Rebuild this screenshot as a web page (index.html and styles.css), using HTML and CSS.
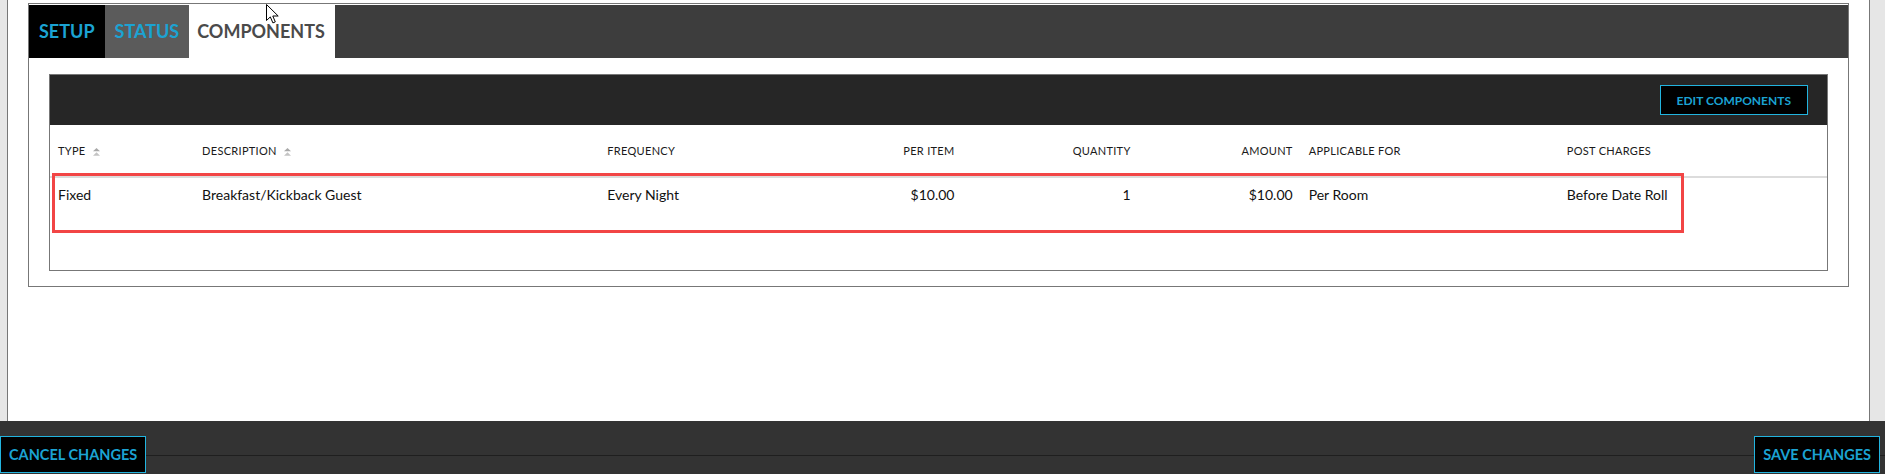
FILE: index.html
```html
<!DOCTYPE html>
<html>
<head>
  <title>Package Components</title>
  <meta name="viewport" content="width=device-width, initial-scale=1">
  <link rel="stylesheet" href="styles.css">
</head>
<body>
  <div class="app">
    <div class="workspace">
      <main class="content">
        <section class="panel">
          <nav class="tabs">
            <a class="tab tab-setup">SETUP</a>
            <a class="tab tab-status">STATUS</a>
            <a class="tab tab-active">COMPONENTS</a>
          </nav>

          <div class="panel-body">
            <div class="grid-box">
              <div class="grid-toolbar">
                <button class="btn btn-edit">EDIT COMPONENTS</button>
              </div>
              <div class="grid-wrap">
                <table class="grid">
                  <colgroup>
                    <col class="c-type"><col class="c-desc"><col class="c-freq"><col class="c-per">
                    <col class="c-qty"><col class="c-amt"><col class="c-app"><col class="c-post">
                  </colgroup>
                  <thead>
                    <tr>
                      <th>Type <svg class="sort" width="7" height="8" viewBox="0 0 7 8"><path d="M3.5 0L7 3.3H0z" fill="#a9a9a9"/><path d="M3.5 4.3L7 7.8H0z" fill="#c4c4c4"/></svg></th>
                      <th>Description <svg class="sort" width="7" height="8" viewBox="0 0 7 8"><path d="M3.5 0L7 3.3H0z" fill="#a9a9a9"/><path d="M3.5 4.3L7 7.8H0z" fill="#c4c4c4"/></svg></th>
                      <th>Frequency</th>
                      <th class="num">Per Item</th>
                      <th class="num">Quantity</th>
                      <th class="num">Amount</th>
                      <th>Applicable For</th>
                      <th>Post Charges</th>
                    </tr>
                  </thead>
                  <tbody>
                    <tr>
                      <td>Fixed</td>
                      <td>Breakfast/Kickback Guest</td>
                      <td>Every Night</td>
                      <td class="num">$10.00</td>
                      <td class="num">1</td>
                      <td class="num">$10.00</td>
                      <td>Per Room</td>
                      <td>Before Date Roll</td>
                    </tr>
                  </tbody>
                </table>
              </div>
            </div>
          </div>
        </section>
      </main>
    </div>

    <footer class="actions">
      <button class="btn btn-footer">CANCEL CHANGES</button>
      <button class="btn btn-footer">SAVE CHANGES</button>
    </footer>
  </div>

  <!-- row highlight -->
  <div class="highlight"></div>

  <!-- mouse pointer -->
  <svg class="pointer" width="13" height="20" viewBox="0 0 13 20">
    <path d="M0.5 0.5V16.5L4.3 12.9L6.9 18.9L9.3 17.9L6.8 12H12.2Z" fill="#fff" stroke="#000" stroke-width="1" stroke-linejoin="round"/>
  </svg>
</body>
</html>
```

FILE: styles.css
```css
* { box-sizing: border-box; }
body { margin: 0; font-family: Lato, "Open Sans", Arial, sans-serif; color: #1a1a1a; background: #fff; }
.app { display: flex; flex-direction: column; height: 474px; }

/* main area with grey gutters either side */
.workspace { height: 421px; display: flex; background: #e6e6e6; padding: 0 15px 0 7px; }
.content { flex: 1; background: #fff; border-left: 1px solid #777; border-right: 1px solid #777; padding: 3px 20px 0 20px; }

.panel { border: 1px solid #777; padding-top: 1px; }

.tabs { display: flex; height: 53px; background: #3d3d3d; }
.tab {
  display: block;
  padding: 0 10px;
  line-height: 53px;
  font-size: 18px;
  font-weight: 700;
  color: #1ba3d3;
  cursor: pointer;
}
.tab-setup { background: #000; }
.tab-status { background: #5b5b5b; }
.tab-active { background: #fff; color: #4a4a4a; padding: 0 10px 0 8px; }

.panel-body { padding: 16px 20px 15px 20px; }

.grid-box { border: 1px solid #777; }
.grid-toolbar { height: 50px; background: #262626; display: flex; justify-content: flex-end; align-items: center; padding-right: 19px; }

.btn {
  background: #000;
  border: 1px solid #22b4df;
  color: #1ba3d3;
  font-family: Lato, "Open Sans", Arial, sans-serif;
  font-weight: 700;
  cursor: pointer;
}
.btn-edit { height: 30px; padding: 0 16px; font-size: 12px; }

.grid-wrap { padding-bottom: 59px; }
.grid { width: 100%; border-collapse: collapse; table-layout: fixed; }
.c-type { width: 144px; }
.c-desc { width: 405px; }
.c-freq { width: 201px; }
.c-per { width: 162px; }
.c-qty { width: 176px; }
.c-amt { width: 162px; }
.c-app { width: 258px; }
.c-post { width: 268px; }

.grid th {
  height: 52px;
  padding: 0 8px;
  text-align: left;
  font-size: 11px;
  font-weight: 400;
  text-transform: uppercase;
  letter-spacing: 0.3px;
  color: #1a1a1a;
  border-bottom: 2px solid #dcdcdc;
  white-space: nowrap;
}
.grid td { height: 34px; padding: 0 8px; font-size: 14px; color: #111; white-space: nowrap; }
.grid .num { text-align: right; }
.sort { margin-left: 4px; vertical-align: -1px; }

.actions {
  height: 53px;
  display: flex;
  justify-content: space-between;
  align-items: flex-start;
  padding: 15px 5px 0 0;
  background: linear-gradient(#333 0 34px, #1f1f1f 34px 35px, #333 35px);
}
.btn-footer { height: 37px; padding: 0 8px; font-size: 14.5px; }

.highlight { position: absolute; left: 52px; top: 173px; width: 1632px; height: 60px; border: 3px solid #f24545; pointer-events: none; }
.pointer { position: absolute; left: 266px; top: 4px; }
```
